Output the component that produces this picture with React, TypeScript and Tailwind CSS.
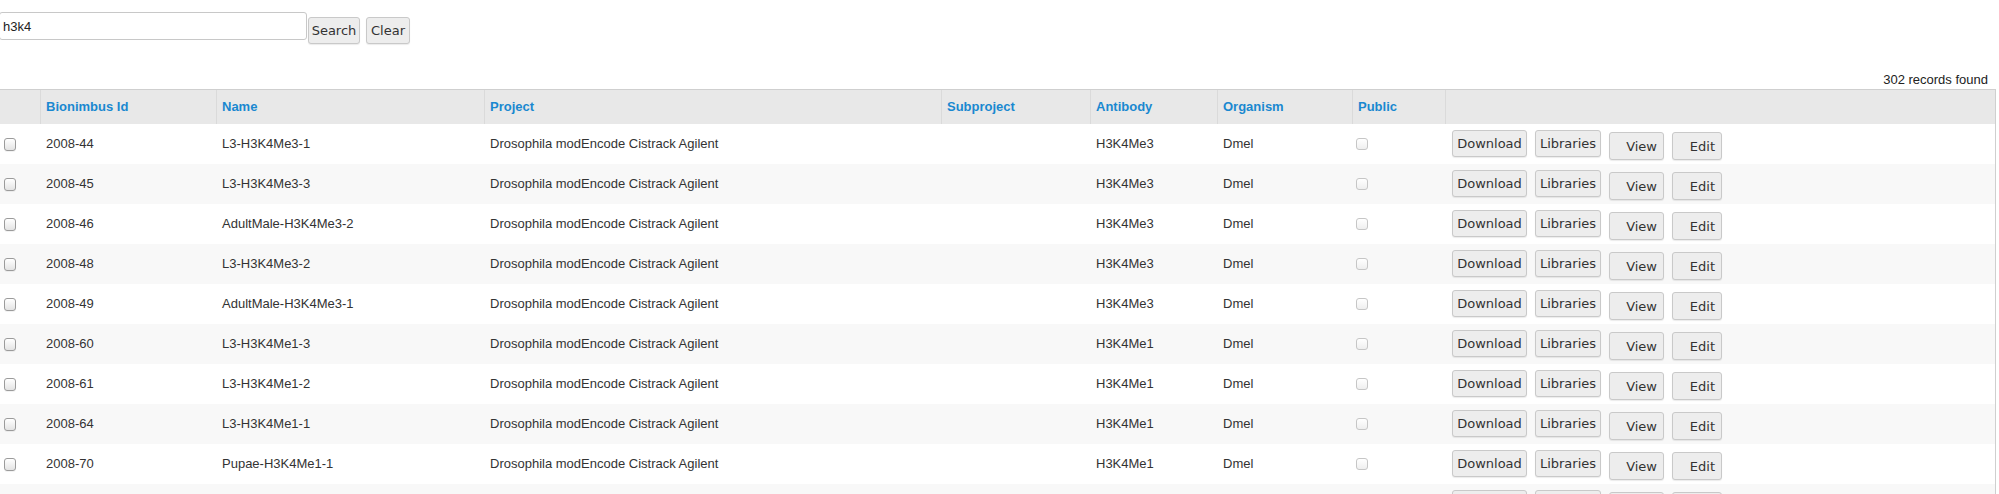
import React from "react";

type Row = { id: string; name: string; antibody: string };

const rows: Row[] = [
  { id: "2008-44", name: "L3-H3K4Me3-1", antibody: "H3K4Me3" },
  { id: "2008-45", name: "L3-H3K4Me3-3", antibody: "H3K4Me3" },
  { id: "2008-46", name: "AdultMale-H3K4Me3-2", antibody: "H3K4Me3" },
  { id: "2008-48", name: "L3-H3K4Me3-2", antibody: "H3K4Me3" },
  { id: "2008-49", name: "AdultMale-H3K4Me3-1", antibody: "H3K4Me3" },
  { id: "2008-60", name: "L3-H3K4Me1-3", antibody: "H3K4Me1" },
  { id: "2008-61", name: "L3-H3K4Me1-2", antibody: "H3K4Me1" },
  { id: "2008-64", name: "L3-H3K4Me1-1", antibody: "H3K4Me1" },
  { id: "2008-70", name: "Pupae-H3K4Me1-1", antibody: "H3K4Me1" },
  { id: "2008-71", name: "Pupae-H3K4Me1-2", antibody: "H3K4Me1" },
];

const cols =
  "grid grid-cols-[40px_176px_268px_457px_149px_127px_135px_93px_1fr]";

const btn =
  "h-[27px] border border-[#c9c9c9] rounded-[3px] bg-[#ededed] shadow-[0_1px_1px_rgba(0,0,0,0.08)] text-[#333] text-[13px] font-['DejaVu_Sans',sans-serif] leading-none flex items-center";

function Check({ light }: { light?: boolean }) {
  return (
    <span
      className={
        light
          ? "block w-[12px] h-[12px] rounded-[3px] border border-[#c6c6c6] bg-gradient-to-b from-white to-[#efefef]"
          : "block w-[12px] h-[13px] rounded-[3px] border border-[#9b9b9b] bg-gradient-to-b from-white to-[#e4e4e4] shadow-[0_1px_0_rgba(0,0,0,0.05)]"
      }
    />
  );
}

const headers = [
  "",
  "Bionimbus Id",
  "Name",
  "Project",
  "Subproject",
  "Antibody",
  "Organism",
  "Public",
  "",
];

export default function App() {
  return (
    <div className="w-[1999px] bg-white text-[#333] text-[13px] font-['Liberation_Sans',Arial,sans-serif]">
      <div className="flex items-start h-[45px]">
        <input
          readOnly
          value="h3k4"
          className="-ml-px mt-[12px] h-[28px] w-[308px] border border-[#c8c8c8] rounded-[3px] pl-[3px] pr-0 py-0 text-[13px] text-[#222] outline-none bg-white"
        />
        <button className={`${btn} ml-px mt-[17px] w-[52px] justify-center`}>
          Search
        </button>
        <button className={`${btn} ml-[6px] mt-[17px] w-[44px] justify-center`}>
          Clear
        </button>
      </div>
      <div className="h-[44px] flex items-end justify-end pr-[11px] leading-[18px] text-[#222]">
        302 records found
      </div>
      <div className="w-[1996px] border-r border-[#cfcfcf]">
        <div className={`${cols} h-[35px] border-t border-[#cfcfcf] bg-[#e8e8e8]`}>
          {headers.map((h, i) => (
            <div
              key={i}
              className={
                i === 0
                  ? ""
                  : "border-l border-[#dadada] pl-[5px] flex items-center font-bold text-[#1a88d0]"
              }
            >
              {h}
            </div>
          ))}
        </div>
        {rows.map((r, i) => (
          <div
            key={r.id}
            className={`${cols} h-[40px] ${i % 2 === 1 ? "bg-[#f8f8f8]" : "bg-white"}`}
          >
            <div className="pl-[4px] flex items-center">
              <Check />
            </div>
            <div className="pl-[6px] flex items-center">{r.id}</div>
            <div className="pl-[6px] flex items-center">{r.name}</div>
            <div className="pl-[6px] flex items-center">
              Drosophila modEncode Cistrack Agilent
            </div>
            <div className="pl-[6px] flex items-center"></div>
            <div className="pl-[6px] flex items-center">{r.antibody}</div>
            <div className="pl-[6px] flex items-center">Dmel</div>
            <div className="pl-[4px] flex items-center">
              <Check light />
            </div>
            <div className="pl-[7px] flex items-start gap-[8px]">
              <button className={`${btn} mt-[6px] w-[75px] justify-center`}>
                Download
              </button>
              <button className={`${btn} mt-[6px] w-[66px] justify-center`}>
                Libraries
              </button>
              <button className={`${btn} mt-[8px] h-[28px] w-[55px] justify-end pr-[6px]`}>
                View
              </button>
              <button className={`${btn} mt-[8px] h-[28px] w-[50px] justify-end pr-[6px]`}>
                Edit
              </button>
            </div>
          </div>
        ))}
      </div>
    </div>
  );
}
